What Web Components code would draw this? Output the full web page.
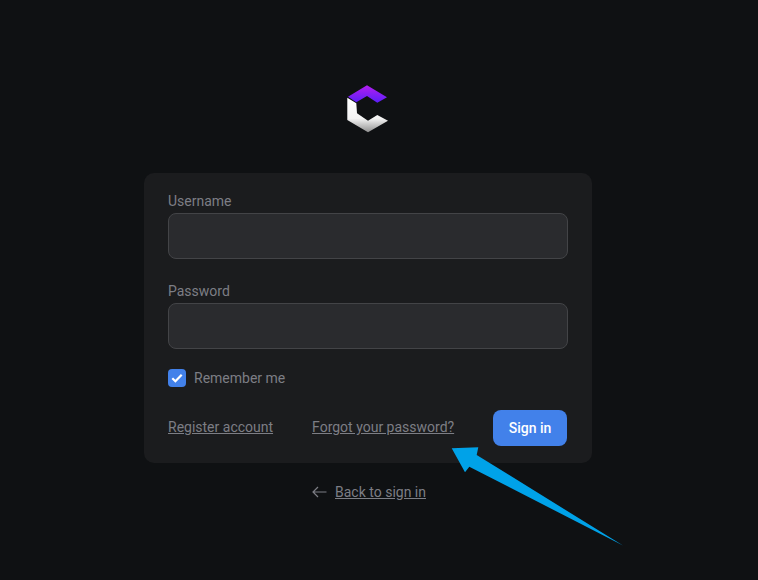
<!DOCTYPE html>
<html>
<head>
<meta charset="utf-8">
<style>
html, body { margin: 0; height: 100%; background: #0f1113; overflow: hidden; }
body { font-family: Roboto, "Liberation Sans", sans-serif; }
</style>
</head>
<body>
<login-page>
  <login-field label="Username"></login-field>
  <login-field label="Password"></login-field>
  <remember-check>Remember me</remember-check>
</login-page>

<script>
class LoginField extends HTMLElement {
  constructor() {
    super();
    this.attachShadow({ mode: 'open' });
    this.shadowRoot.innerHTML = `
<style>
:host { display: block; margin-bottom: 19px; }
:host(:first-child) { margin-bottom: 22px; }
label { display: block; font-size: 14px; line-height: 20px; color: #7d7e85; margin-bottom: 2px; }
.box { height: 44px; border: 1px solid #434447; border-radius: 8px; background: #2a2b2e; }
</style>
<label>${this.getAttribute('label')}</label>
<div class="box"></div>`;
  }
}

class RememberCheck extends HTMLElement {
  constructor() {
    super();
    this.attachShadow({ mode: 'open' });
    this.shadowRoot.innerHTML = `
<style>
:host { display: flex; align-items: center; gap: 8px; height: 20px; font-size: 14px; color: #7d7e85; }
.tick { width: 18px; height: 18px; border-radius: 4px; background: #4281ea; display: flex; align-items: center; justify-content: center; }
</style>
<span class="tick">
  <svg width="12" height="10" viewBox="0 0 12 10"><path d="M1.3 5.2 4.4 8.2 10.7 1.8" fill="none" stroke="#fff" stroke-width="2.2"/></svg>
</span>
<slot></slot>`;
  }
}

class LoginPage extends HTMLElement {
  constructor() {
    super();
    this.attachShadow({ mode: 'open' });
    this.shadowRoot.innerHTML = `
<style>
:host { display: flex; flex-direction: column; align-items: center; position: relative; height: 580px; padding: 84px 22px 0 0; box-sizing: border-box; }
a { color: #7d7e85; font-size: 14px; line-height: 20px; text-decoration: underline; }
.logo { display: block; margin-bottom: 39px; }
.card { width: 448px; height: 290px; box-sizing: border-box; padding: 18px 24px 17px; background: #1b1c1e; border-radius: 10px; }
.actions { display: flex; align-items: center; margin-top: 22px; }
.actions a { position: relative; top: -1px; }
.actions a + a { margin-left: 39px; }
button { margin-left: auto; margin-right: 1px; width: 74px; height: 36px; border: 0; border-radius: 8px; background: #4281ea; color: #fff; font: 500 14px Roboto, sans-serif; }
.back { display: flex; align-items: center; gap: 8px; margin: 19px 0 0 2px; }
.arrow { position: absolute; left: 0; top: 0; pointer-events: none; }
</style>
<svg class="logo" width="44" height="50" viewBox="346 84 44 50">
  <defs>
    <linearGradient id="p" x1="0" y1="0" x2="0" y2="1"><stop offset="0" stop-color="#b41ef0"/><stop offset="1" stop-color="#5a1ff8"/></linearGradient>
    <linearGradient id="w" x1="0" y1="0" x2="0" y2="1"><stop offset="0" stop-color="#ffffff"/><stop offset=".6" stop-color="#f4f4f4"/><stop offset="1" stop-color="#8f8f8f"/></linearGradient>
  </defs>
  <path d="M367 85.3 387 97.3 377.3 102.7 367 96 356.3 102.3 348 96.7Z" fill="url(#p)"/>
  <path d="M347.3 97.7 356.3 103.3 357 113.3 368 120.7 377.3 115 388 120.7 368 132.3 347.3 120Z" fill="url(#w)"/>
</svg>
<div class="card">
  <slot></slot>
  <div class="actions">
    <a href="#">Register account</a>
    <a href="#">Forgot your password?</a>
    <button>Sign in</button>
  </div>
</div>
<div class="back">
  <svg width="15" height="12" viewBox="0 0 15 12"><path d="M14.5 6H1M6 1 1 6l5 5" fill="none" stroke="#7d7e85" stroke-width="1.2"/></svg>
  <a href="#">Back to sign in</a>
</div>
<svg class="arrow" width="758" height="580" viewBox="0 0 758 580">
  <path d="M451.7 448.3 478.3 447.3 476.7 455 623 545.5 469.3 466.7 465 472.3Z" fill="#00a2e8"/>
</svg>`;
  }
}

customElements.define('login-field', LoginField);
customElements.define('remember-check', RememberCheck);
customElements.define('login-page', LoginPage);
</script>
</body>
</html>
